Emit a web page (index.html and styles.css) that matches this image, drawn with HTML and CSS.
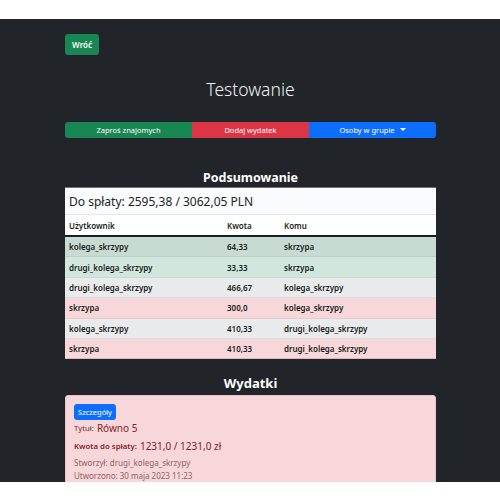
FILE: index.html
```html
<!DOCTYPE html>
<html lang="pl">
<head>
<meta charset="utf-8">
<title>Testowanie</title>
<link rel="stylesheet" href="styles.css">
</head>
<body>
<div class="topgap"></div>
<main class="page">
  <div class="container">
    <a class="btn btn-back">Wróć</a>
    <h1 class="title">Testowanie</h1>
    <div class="btn-group">
      <a class="seg seg-green">Zaproś znajomych</a>
      <a class="seg seg-red">Dodaj wydatek</a>
      <a class="seg seg-blue">Osoby w grupie <span class="caret"></span></a>
    </div>
    <h2 class="section">Podsumowanie</h2>
    <div class="summary">
      <div class="total">Do spłaty: 2595,38 / 3062,05 PLN</div>
      <div class="row head"><span>Użytkownik</span><span>Kwota</span><span>Komu</span></div>
      <div class="row r-green1"><span>kolega_skrzypy</span><span>64,33</span><span>skrzypa</span></div>
      <div class="row r-green2"><span>drugi_kolega_skrzypy</span><span>33,33</span><span>skrzypa</span></div>
      <div class="row r-gray"><span>drugi_kolega_skrzypy</span><span>466,67</span><span>kolega_skrzypy</span></div>
      <div class="row r-pink"><span>skrzypa</span><span>300,0</span><span>kolega_skrzypy</span></div>
      <div class="row r-gray"><span>kolega_skrzypy</span><span>410,33</span><span>drugi_kolega_skrzypy</span></div>
      <div class="row r-pink last"><span>skrzypa</span><span>410,33</span><span>drugi_kolega_skrzypy</span></div>
    </div>
    <h2 class="section section2">Wydatki</h2>
    <div class="expense">
      <a class="btn btn-details">Szczegóły</a>
      <div class="line l-title"><span class="lbl">Tytuł:</span> <span class="val">Równo 5</span></div>
      <div class="line l-amount"><span class="lbl strong">Kwota do spłaty:</span> <span class="val">1231,0 / 1231,0 zł</span></div>
      <div class="meta">Stworzył: drugi_kolega_skrzypy</div>
      <div class="meta">Utworzono: 30 maja 2023 11:23</div>
    </div>
  </div>
</main>
</body>
</html>
```
FILE: styles.css
```css
* { box-sizing: border-box; }
html, body { margin: 0; padding: 0; background: #fff; }
body { font-family: "Noto Sans", "Open Sans", sans-serif; }
.topgap { height: 19px; }
.page {
  background: #212529;
  height: 463px;
  overflow: hidden;
  color: #fff;
}
.container {
  width: 371px;
  margin-left: 65px;
  padding-top: 15px;
}
.btn {
  display: flex;
  align-items: center;
  justify-content: center;
  border-radius: 3px;
  color: #fff;
  font-size: 8px;
  font-weight: 600;
}
.btn-back {
  background: #198754;
  width: 34px;
  height: 21px;
}
.title {
  margin: 0;
  height: 67px;
  display: flex;
  align-items: center;
  justify-content: center;
  font-size: 17.5px;
  font-weight: 300;
  color: #f1f1f1;
}
.btn-group {
  display: flex;
  height: 16px;
  border-radius: 3px;
  overflow: hidden;
}
.seg {
  display: flex;
  align-items: center;
  justify-content: center;
  font-size: 7.5px;
  color: #fff;
}
.seg-green { background: #198754; width: 127px; }
.seg-red { background: #dc3545; width: 117px; }
.seg-blue { background: #0d6efd; flex: 1; }
.caret {
  display: inline-block;
  margin-left: 5px;
  width: 0; height: 0;
  border-left: 3px solid transparent;
  border-right: 3px solid transparent;
  border-top: 3px solid #fff;
  position: relative;
  top: -1px;
}
.section {
  margin: 0;
  height: 49px;
  display: flex;
  align-items: flex-end;
  justify-content: center;
  padding-bottom: 1px;
  font-size: 12.5px;
  font-weight: 700;
  color: #fff;
}
.summary {
  background: #fff;
  color: #212529;
  border-top: 1px solid #6c6f73;
}
.total {
  height: 27px;
  display: flex;
  align-items: center;
  padding-left: 4px;
  font-size: 12px;
  background: #fafbfc;
  border-bottom: 1px solid #e6e7e9;
}
.row {
  display: grid;
  grid-template-columns: 158px 57px 1fr;
  align-items: center;
  height: 20.4px;
  padding-left: 4px;
  font-size: 8px;
  font-weight: 600;
  color: #1a1d20;
  border-bottom: 1px solid #dfe0e2;
}
.row.head {
  height: 22px;
  background: #fff;
  border-bottom: 2px solid #1a1d20;
}
.r-green1 { background: #c7dbd2; border-bottom-color: #bdd0c7; }
.r-green2 { background: #d1e7dd; border-bottom-color: #c6dbd1; }
.r-gray { background: #e9eaec; border-bottom-color: #dcdde0; }
.r-pink { background: #f8d7da; border-bottom-color: #e9cacd; }
.row.last { border-bottom: 1px solid #d8b9bd; }
.section2 { height: 36px; padding-bottom: 3px; font-size: 13px; }
.expense {
  background: #f8d7da;
  border: 1px solid #f1c1c6;
  border-radius: 3px;
  height: 120px;
  padding: 8px 8px;
  color: #842029;
}
.btn-details {
  background: #0d6efd;
  width: 42px;
  height: 16px;
  font-weight: 400;
  font-size: 7.5px;
}
.line { display: flex; align-items: center; gap: 3px; }
.l-title { height: 16px; }
.l-amount { height: 20px; }
.lbl { font-size: 7.8px; }
.lbl.strong { font-weight: 600; }
.val { font-size: 10px; }
.meta {
  font-size: 8px;
  color: #946067;
  height: 13px;
  display: flex;
  align-items: center;
}
```
